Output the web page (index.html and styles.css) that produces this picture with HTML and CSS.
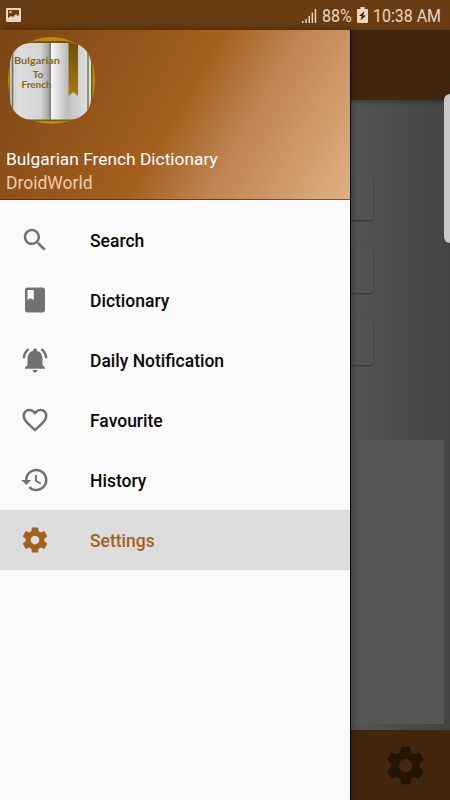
FILE: index.html
```html
<!DOCTYPE html>
<html lang="en">
<head>
    <meta charset="UTF-8">
    <meta name="viewport" content="width=device-width, initial-scale=1.0">
    <title>Bulgarian French Dictionary</title>
    <link rel="stylesheet" href="styles.css">
</head>
<body>

<div class="screen">
    <header class="status-bar">
        <svg class="picture-icon" viewBox="0 0 16 14"><path fill-rule="evenodd" d="M1 0h13a1 1 0 0 1 1 1v12a1 1 0 0 1-1 1H1a1 1 0 0 1-1-1V1a1 1 0 0 1 1-1zM2 2v8l3-2 2 1 3-3 1.500 2L13 7V2zM3.500 3h2v2h-2z"/></svg>
        <div class="status-right">
            <svg class="signal-icon" viewBox="0 0 16 15"><path d="M1 13h1.500v2H1zM4.300 11h1.500v4H4.300zM7.500 8H9v7H7.500zM10.600 4.500h1.500V15h-1.500zM13.700 1h1.500v14h-1.500z"/></svg>
            <span class="percent">88%</span>
            <svg class="battery-icon" viewBox="0 0 11 16"><path d="M3.500 0h4v2H10a1 1 0 0 1 1 1v12a1 1 0 0 1-1 1H1a1 1 0 0 1-1-1V3a1 1 0 0 1 1-1h2.500z"/><path class="bolt" d="M7.500 4L2 9h2.700L3.500 13.500 9 8.500H6.200z"/></svg>
            <span class="clock">10:38 AM</span>
        </div>
    </header>

    <main class="app">
        <div class="toolbar"></div>
        <div class="content">
            <div class="buttons">
                <div class="card"></div>
                <div class="card"></div>
                <div class="card"></div>
            </div>
            <div class="panel"></div>
        </div>
        <footer class="bottom-bar">
            <svg viewBox="0 0 24 24"><use href="#gear"/></svg>
        </footer>
    </main>

    <nav class="drawer">
        <div class="drawer-header">
            <svg class="logo" viewBox="0 0 88 88">
                <defs>
                    <linearGradient id="pageLeft">
                        <stop offset="0" stop-color="#c4c4c4"/>
                        <stop offset=".2" stop-color="#dedede"/>
                        <stop offset=".75" stop-color="#d4d4d6"/>
                        <stop offset=".93" stop-color="#a8a8a8"/>
                        <stop offset="1" stop-color="#777777"/>
                    </linearGradient>
                    <linearGradient id="pageRight">
                        <stop offset="0" stop-color="#f6f6f6"/>
                        <stop offset=".15" stop-color="#e2e2e2"/>
                        <stop offset=".4" stop-color="#bdbdbd"/>
                        <stop offset=".7" stop-color="#d2d2d2"/>
                        <stop offset="1" stop-color="#e2e2e2"/>
                    </linearGradient>
                    <linearGradient id="ribbon" x1="0" y1="0" x2="0" y2="1">
                        <stop offset="0" stop-color="#705006"/>
                        <stop offset="1" stop-color="#a8790d"/>
                    </linearGradient>
                    <clipPath id="pages"><rect x="3" y="6" width="81" height="76.500" rx="21"/></clipPath>
                </defs>
                <rect x="1" y="0" width="87" height="87" rx="43" ry="41" fill="#bb8910"/>
                <rect x="2.500" y="4" width="83" height="80" rx="29" fill="#6d5b13"/>
                <g clip-path="url(#pages)">
                    <rect x="3" y="6" width="41" height="77" fill="url(#pageLeft)"/>
                    <rect x="44" y="6" width="40" height="77" fill="url(#pageRight)"/>
                    <path d="M5.500 6v77M81 6v77" stroke="#777352" stroke-width="1.500"/>
                    <path d="M61.500 6H71v53l-4.700-4-4.800 4z" fill="url(#ribbon)"/>
                </g>
                <g class="logo-text">
                    <text x="30" y="27" textLength="46" lengthAdjust="spacingAndGlyphs">Bulgarian</text>
                    <text x="31" y="40.500">To</text>
                    <text x="29.500" y="51" textLength="30" lengthAdjust="spacingAndGlyphs">French</text>
                </g>
            </svg>
            <div class="app-name">Bulgarian French Dictionary</div>
            <div class="author">DroidWorld</div>
        </div>

        <div class="menu">
            <div class="menu-item">
                <svg viewBox="0 0 24 24"><path d="M15.500 14h-.79l-.28-.27C15.410 12.590 16 11.110 16 9.500 16 5.910 13.090 3 9.500 3S3 5.910 3 9.500 5.910 16 9.500 16c1.610 0 3.090-.59 4.230-1.570l.27.28v.79l5 4.990L20.490 19l-4.990-5zm-6 0C7.010 14 5 11.990 5 9.500S7.010 5 9.500 5 14 7.010 14 9.500 11.990 14 9.500 14z"/></svg>
                <span>Search</span>
            </div>
            <div class="menu-item">
                <svg viewBox="0 0 24 24"><path d="M18 2H6c-1.100 0-2 .9-2 2v16c0 1.100.9 2 2 2h12c1.100 0 2-.9 2-2V4c0-1.100-.9-2-2-2zM6 4h5v8l-2.500-1.500L6 12V4z"/></svg>
                <span>Dictionary</span>
            </div>
            <div class="menu-item">
                <svg viewBox="0 0 24 24"><path d="M7.580 4.080L6.150 2.650C3.750 4.480 2.170 7.300 2.030 10.500h2c.15-2.650 1.510-4.970 3.550-6.420zm12.390 6.420h2c-.15-3.200-1.730-6.020-4.120-7.850l-1.420 1.430c2.020 1.450 3.390 3.770 3.540 6.420zM18 11c0-3.070-1.640-5.640-4.500-6.320V4c0-.83-.67-1.500-1.500-1.500s-1.500.67-1.500 1.500v.68C7.630 5.360 6 7.920 6 11v5l-2 2v1h16v-1l-2-2v-5zm-6 11c.14 0 .27-.01.4-.04.65-.14 1.180-.58 1.440-1.180.1-.24.15-.5.15-.78h-4c.01 1.100.9 2 2.010 2z"/></svg>
                <span>Daily Notification</span>
            </div>
            <div class="menu-item">
                <svg viewBox="0 0 24 24"><path d="M16.500 3c-1.740 0-3.410.81-4.500 2.090C10.910 3.810 9.240 3 7.500 3 4.420 3 2 5.420 2 8.500c0 3.780 3.400 6.860 8.550 11.540L12 21.350l1.450-1.320C18.600 15.360 22 12.280 22 8.500 22 5.420 19.580 3 16.500 3zm-4.400 15.550l-.1.1-.1-.1C7.140 14.240 4 11.390 4 8.500 4 6.500 5.500 5 7.500 5c1.540 0 3.040.99 3.570 2.360h1.870C13.460 5.990 14.960 5 16.500 5c2 0 3.500 1.500 3.500 3.500 0 2.890-3.140 5.740-7.900 10.050z"/></svg>
                <span>Favourite</span>
            </div>
            <div class="menu-item">
                <svg viewBox="0 0 24 24"><path d="M13 3c-4.970 0-9 4.030-9 9H1l3.890 3.890.07.14L9 12H6c0-3.870 3.130-7 7-7s7 3.130 7 7-3.130 7-7 7c-1.930 0-3.680-.79-4.940-2.060l-1.420 1.420C8.270 19.990 10.510 21 13 21c4.970 0 9-4.030 9-9s-4.030-9-9-9zm-1 5v5l4.280 2.540.72-1.210-3.500-2.080V8H12z"/></svg>
                <span>History</span>
            </div>
            <div class="menu-item active">
                <svg viewBox="0 0 24 24"><path id="gear" d="M19.430 12.980c.04-.32.07-.64.07-.98s-.03-.66-.07-.98l2.110-1.650c.19-.15.24-.42.12-.64l-2-3.460c-.12-.22-.39-.3-.61-.22l-2.490 1c-.52-.4-1.080-.73-1.690-.98l-.38-2.650C14.460 2.180 14.250 2 14 2h-4c-.25 0-.46.18-.49.42l-.38 2.650c-.61.25-1.170.59-1.690.98l-2.490-1c-.23-.09-.49 0-.61.22l-2 3.460c-.13.22-.07.49.12.64l2.110 1.650c-.04.32-.07.65-.07.98s.03.66.07.98l-2.110 1.650c-.19.15-.24.42-.12.64l2 3.460c.12.22.39.3.61.22l2.490-1c.52.4 1.080.73 1.690.98l.38 2.650c.03.24.24.42.49.42h4c.25 0 .46-.18.49-.42l.38-2.650c.61-.25 1.170-.59 1.690-.98l2.490 1c.23.09.49 0 .61-.22l2-3.460c.12-.22.07-.49-.12-.64l-2.110-1.650zM12 15.500c-1.930 0-3.500-1.570-3.500-3.500s1.570-3.500 3.500-3.500 3.500 1.570 3.500 3.500-1.570 3.500-3.500 3.500z"/></svg>
                <span>Settings</span>
            </div>
        </div>
    </nav>

    <div class="edge-handle"></div>
</div>

</body>
</html>
```

FILE: styles.css
```css
* {
    box-sizing: border-box;
}
body {
    margin: 0;
    font-family: Roboto, sans-serif;
}
.screen {
    position: relative;
    display: flex;
    flex-direction: column;
    width: 450px;
    height: 800px;
    overflow: hidden;
}
.status-bar {
    display: flex;
    justify-content: space-between;
    height: 30px;
    padding: 0 7px 0 6px;
    align-items: center;
    background: #693c13;
    color: #f0d5bd;
    font-size: 19px;
}
.status-bar svg {
    fill: #f0d5bd;
}
.picture-icon {
    width: 16px;
    height: 14px;
}
.status-right {
    display: flex;
    align-items: center;
}
.signal-icon {
    width: 16px;
    height: 15px;
    margin-right: 5px;
}
.battery-icon {
    width: 11px;
    height: 16px;
    margin: 0 5px;
}
.status-bar .bolt {
    fill: #3d2108;
}
/* narrow digits like the phone's status font */
.percent, .clock {
    display: block;
    line-height: 30px;
    padding-top: 2px;
    white-space: nowrap;
    transform: scaleX(0.84);
    transform-origin: left;
}
.percent {
    width: 30px;
}
.clock {
    width: 70px;
}
/* dimmed page behind the drawer */
.app {
    flex: 1;
    display: flex;
    flex-direction: column;
}
.toolbar {
    height: 70px;
    background: #42260d;
    box-shadow: 0 2px 4px rgba(0, 0, 0, 0.3);
    z-index: 1;
}
.content {
    flex: 1;
    display: flex;
    flex-direction: column;
    justify-content: space-between;
    padding: 75px 6px 6px;
    background: linear-gradient(90deg, #555 0, #555 350px, #484848 425px, #454545 100%);
}
.buttons {
    display: flex;
    flex-direction: column;
    gap: 27.5px;
    padding: 0 71px;
}
.card {
    height: 45px;
    border-radius: 3px;
    background: #545454;
    box-shadow: 0 1px 2px rgba(0, 0, 0, 0.4);
}
.panel {
    height: 284px;
    background: #565656;
}
.bottom-bar {
    display: flex;
    justify-content: flex-end;
    align-items: center;
    height: 70px;
    padding-right: 22px;
    background: #42260d;
}
.bottom-bar svg {
    width: 45px;
    height: 45px;
    fill: #251404;
}
.drawer {
    position: absolute;
    top: 30px;
    left: 0;
    bottom: 0;
    width: 350px;
    z-index: 2;
    background: #fafafa;
    box-shadow: 1px 0 0 #080808, 2px 0 8px rgba(0, 0, 0, 0.35);
}
.drawer-header {
    height: 170px;
    padding: 7px 6px 0;
    background: linear-gradient(120deg, #7c4515 0%, #a5601e 50%, #be8350 67%, #e0b083 100%);
    border-bottom: 1px solid rgba(80, 20, 0, 0.5);
}
.logo {
    display: block;
    width: 88px;
    height: 88px;
    margin-left: 1px;
}
.logo-text {
    font-family: Lato, sans-serif;
    font-size: 10px;
    font-weight: bold;
    fill: #8c6610;
    text-anchor: middle;
}
.app-name, .author {
    height: 24px;
    font-size: 17.5px;
    line-height: 24px;
}
.app-name {
    margin-top: 22px;
    color: #fff;
    font-size: 17.35px;
}
.author {
    color: #efcbaa;
}
.menu {
    padding-top: 10px;
}
.menu-item {
    display: flex;
    align-items: center;
    gap: 40px;
    height: 60px;
    padding: 0 20px;
    color: #080808;
    font-size: 17.5px;
    font-weight: 500;
}
.menu-item span {
    padding-top: 2px;
}
.menu-item svg {
    width: 30px;
    height: 30px;
    fill: #727272;
}
.menu-item.active {
    background: #dcdcdc;
    color: #a5601e;
}
.menu-item.active svg {
    fill: #a5601e;
}
.edge-handle {
    position: absolute;
    top: 94px;
    right: -6px;
    width: 12px;
    height: 149px;
    border-radius: 6px;
    background: #c9c9c9;
    z-index: 3;
}
```
